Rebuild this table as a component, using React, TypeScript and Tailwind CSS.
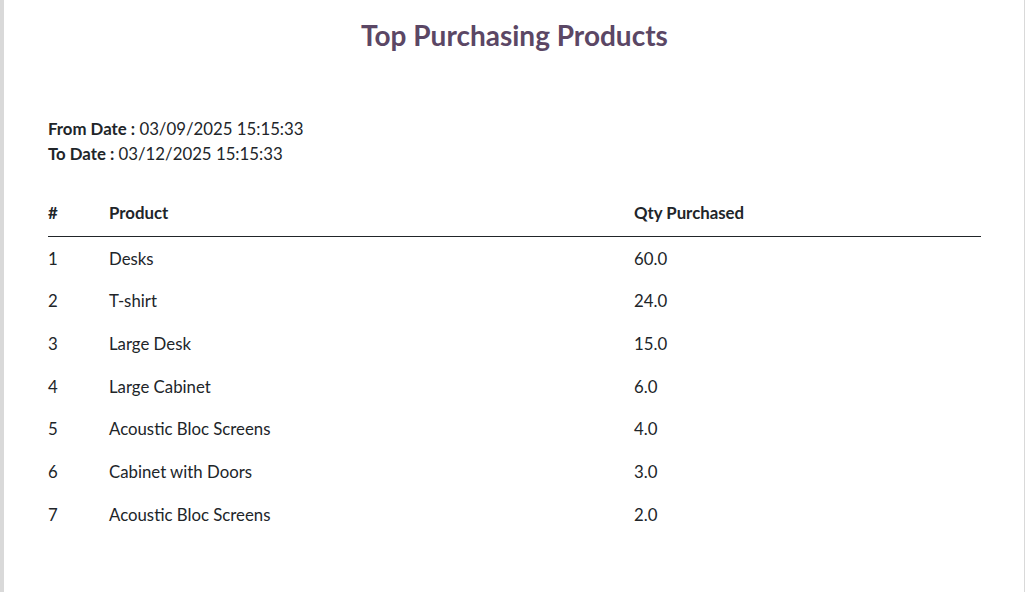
const rows = [
  { no: 1, product: "Desks", qty: "60.0" },
  { no: 2, product: "T-shirt", qty: "24.0" },
  { no: 3, product: "Large Desk", qty: "15.0" },
  { no: 4, product: "Large Cabinet", qty: "6.0" },
  { no: 5, product: "Acoustic Bloc Screens", qty: "4.0" },
  { no: 6, product: "Cabinet with Doors", qty: "3.0" },
  { no: 7, product: "Acoustic Bloc Screens", qty: "2.0" },
];

export default function App() {
  return (
    <div className="h-[592px] bg-[#d9d9d9] pl-[4px] pr-[1px] font-['Lato','Liberation_Sans',sans-serif] text-[#212529]">
      <div className="h-full bg-white px-[44px] pr-[43px]">
        <h2 className="pt-[16px] text-center text-[28px] font-bold leading-[38px] text-[#5b4765]">
          Top Purchasing Products
        </h2>

        <div className="mt-[62px] text-[16.8px] leading-[25px]">
          <div>
            <span className="font-bold">From Date :</span> 03/09/2025 15:15:33
          </div>
          <div>
            <span className="font-bold">To Date :</span> 03/12/2025 15:15:33
          </div>
        </div>

        <div className="mt-[24px] text-[16.8px]">
          <div className="grid h-[47px] grid-cols-[61px_525px_1fr] items-center border-b border-[#212529] font-bold">
            <div>#</div>
            <div>Product</div>
            <div>Qty Purchased</div>
          </div>
          {rows.map((r) => (
            <div
              key={r.no}
              className="grid h-[42.67px] grid-cols-[61px_525px_1fr] items-center"
            >
              <div>{r.no}</div>
              <div>{r.product}</div>
              <div>{r.qty}</div>
            </div>
          ))}
        </div>
      </div>
    </div>
  );
}
